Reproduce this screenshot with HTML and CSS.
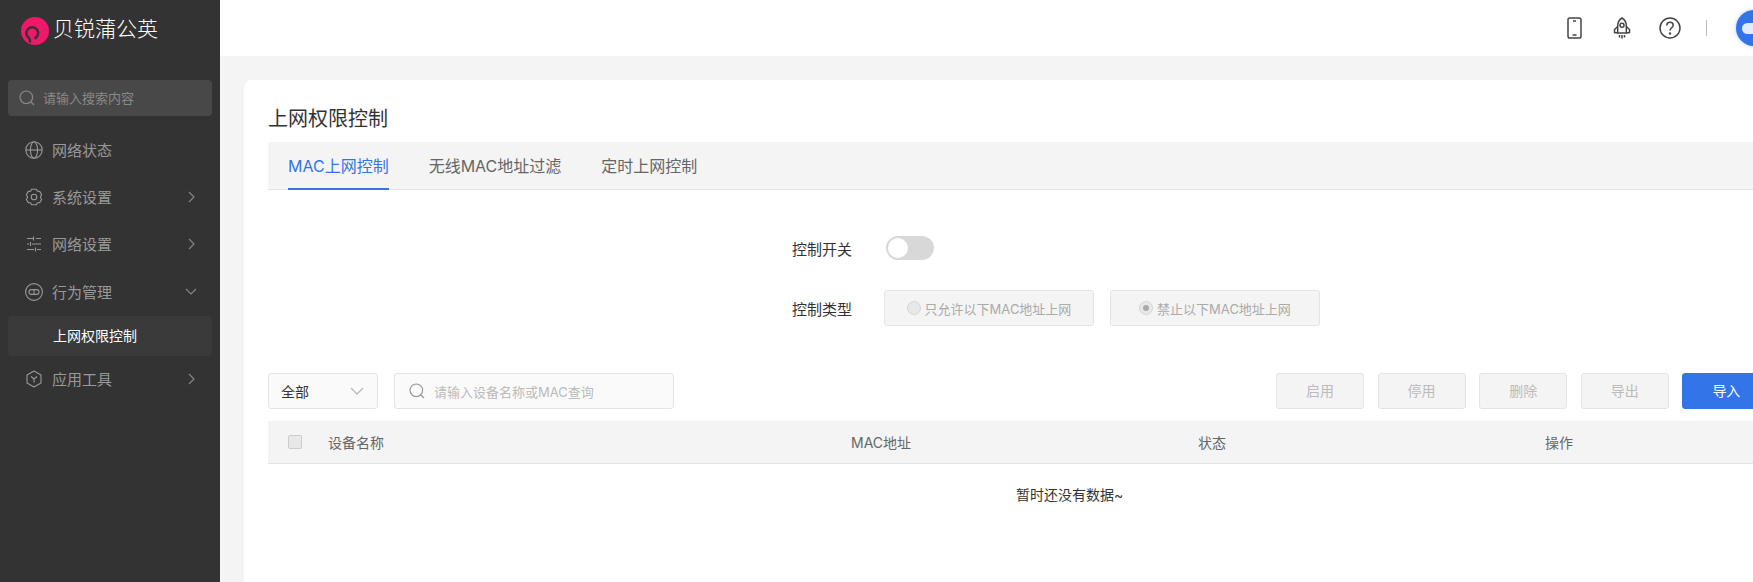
FILE: index.html
```html
<!DOCTYPE html>
<html lang="zh-CN">
<head>
<meta charset="utf-8">
<title>上网权限控制</title>
<link rel="stylesheet" href="styles.css">
</head>
<body>
<div class="app">
  <aside class="sidebar">
    <div class="brand">
      <svg class="logo" viewBox="0 0 28 28"><circle cx="14" cy="14" r="14" fill="#f0186a"/><path d="M8.800 25.500c.4-1.500.3-3-.6-4.400A5.900 5.900 0 1 1 13.500 21.500" fill="none" stroke="#333" stroke-width="2.500"/></svg>
      <span class="brand-name">贝锐蒲公英</span>
    </div>
    <div class="side-search">
      <svg class="ic15" viewBox="0 0 16 16"><circle cx="7.300" cy="7.300" r="6.300" fill="none" stroke="#888" stroke-width="1.200"/><path d="M12 12l3 3" stroke="#888" stroke-width="1.200"/></svg>
      <span>请输入搜索内容</span>
    </div>
    <nav class="menu">
      <div class="item">
        <svg class="ic18" viewBox="0 0 18 18" fill="none" stroke="#999" stroke-width="1.100"><circle cx="9" cy="9" r="8.200"/><ellipse cx="9" cy="9" rx="3.600" ry="8.200"/><path d="M1 9h16"/></svg>
        <span class="label">网络状态</span>
      </div>
      <div class="item">
        <svg class="ic18" viewBox="0 0 18 18" fill="none" stroke="#999" stroke-width="1.100"><path d="M6.600 1.200h4.800l1 2 2.300.2 1.900 3.100-1.200 2.500 1.200 2.500-1.900 3.100-2.300.2-1 2H6.600l-1-2-2.300-.2-1.900-3.100L2.600 9 1.400 6.500l1.900-3.100 2.300-.2z" stroke-linejoin="round"/><circle cx="9" cy="9" r="2.800"/></svg>
        <span class="label">系统设置</span>
        <svg class="chev-r" viewBox="0 0 7 12" fill="none" stroke="#888" stroke-width="1.100"><path d="M1 1l5 5-5 5"/></svg>
      </div>
      <div class="item">
        <svg class="ic18" viewBox="0 0 18 18" fill="none" stroke="#999" stroke-width="1.100"><path d="M2 3.500h6M11 3.500h5M8.500 1.500v4M2 9h2M7 9h9M5.500 7v4M2 14.500h7M12 14.500h4M10.500 12.500v4"/></svg>
        <span class="label">网络设置</span>
        <svg class="chev-r" viewBox="0 0 7 12" fill="none" stroke="#888" stroke-width="1.100"><path d="M1 1l5 5-5 5"/></svg>
      </div>
      <div class="item">
        <svg class="ic18" viewBox="0 0 18 18" fill="none" stroke="#999" stroke-width="1.100"><circle cx="9" cy="9" r="8.400"/><rect x="4" y="6.600" width="10" height="4.800" rx="2.400"/><path d="M9 6.600v4.800"/></svg>
        <span class="label">行为管理</span>
        <svg class="chev-d" viewBox="0 0 12 7" fill="none" stroke="#888" stroke-width="1.100"><path d="M1 1l5 5 5-5"/></svg>
      </div>
      <div class="subitem">上网权限控制</div>
      <div class="item">
        <svg class="ic18" viewBox="0 0 18 18" fill="none" stroke="#999" stroke-width="1.100"><path d="M9 1l7 4v8l-7 4-7-4V5z" stroke-linejoin="round"/><path d="M6 6.500l3 2.500 3-2.500M9 9v3.500"/></svg>
        <span class="label">应用工具</span>
        <svg class="chev-r" viewBox="0 0 7 12" fill="none" stroke="#888" stroke-width="1.100"><path d="M1 1l5 5-5 5"/></svg>
      </div>
    </nav>
  </aside>
  <div class="main">
    <header class="topbar">
      <svg class="top-phone" viewBox="0 0 15 22" fill="none" stroke="#444" stroke-width="1.500"><rect x="1" y="1" width="13" height="20" rx="1.800"/><path d="M6 4h3M5.500 18h4"/></svg>
      <svg class="top-rocket" viewBox="0 0 20 22" fill="none" stroke="#444" stroke-width="1.500"><path d="M10 1c3 1.800 4.300 4.500 4.300 8v7H5.700V9c0-3.500 1.300-6.200 4.300-8z" stroke-linejoin="round"/><circle cx="10" cy="8.300" r="2"/><path d="M5.700 9.500L2.500 12.500v3l3.200.5M14.300 9.500l3.200 3v3l-3.200.5M7.500 18v2.500M10 18v3.500M12.500 18v2.500"/></svg>
      <svg class="top-help" viewBox="0 0 22 22" fill="none" stroke="#444" stroke-width="1.500"><circle cx="11" cy="11" r="10"/><path d="M7.800 8.500c0-2 1.400-3.200 3.200-3.200s3.200 1.200 3.200 2.900c0 2.500-3.200 2.600-3.200 5.300"/><circle cx="11" cy="16.500" r=".5" fill="#444"/></svg>
      <span class="top-divider"></span>
      <span class="avatar"><span class="avatar-pill"></span></span>
    </header>
    <section class="card">
      <h1 class="title">上网权限控制</h1>
      <div class="tabs">
        <span class="tab active">MAC上网控制</span>
        <span class="tab">无线MAC地址过滤</span>
        <span class="tab">定时上网控制</span>
      </div>
      <div class="form">
        <div class="row switch-row">
          <span class="form-label">控制开关</span>
          <span class="switch"><span class="knob"></span></span>
        </div>
        <div class="row type-row">
          <span class="form-label">控制类型</span>
          <span class="radio-box"><span class="radio"></span>只允许以下MAC地址上网</span>
          <span class="radio-box"><span class="radio on"></span>禁止以下MAC地址上网</span>
        </div>
      </div>
      <div class="toolbar">
        <div class="select">全部
          <svg class="sel-chev" viewBox="0 0 14 8" fill="none" stroke="#bbb" stroke-width="1.300"><path d="M1 1l6 6 6-6"/></svg>
        </div>
        <div class="query">
          <svg class="ic15" viewBox="0 0 16 16"><circle cx="7.300" cy="7.300" r="6.300" fill="none" stroke="#999" stroke-width="1.200"/><path d="M12 12l3 3" stroke="#999" stroke-width="1.200"/></svg>
          <span>请输入设备名称或MAC查询</span>
        </div>
        <div class="actions">
          <span class="btn">启用</span>
          <span class="btn">停用</span>
          <span class="btn">删除</span>
          <span class="btn">导出</span>
          <span class="btn primary">导入</span>
        </div>
      </div>
      <div class="thead">
        <span class="check"></span>
        <span class="th th-name">设备名称</span>
        <span class="th th-mac">MAC地址</span>
        <span class="th th-state">状态</span>
        <span class="th">操作</span>
      </div>
      <div class="empty">暂时还没有数据~</div>
    </section>
  </div>
</div>
</body>
</html>
```
FILE: styles.css
```css
* { box-sizing: border-box; }
html, body { margin: 0; padding: 0; height: 100%; overflow: hidden; }
body { font-family: "Inter", "Noto Sans CJK SC", sans-serif; font-size: 14px; color: #333; background: #f4f4f4; }
svg { display: block; flex: none; }
.app { display: flex; width: 1753px; height: 582px; overflow: hidden; }

.sidebar { width: 220px; flex: none; background: #333; }
.brand { display: flex; align-items: center; height: 62px; padding: 0 0 0 21px; }
.logo { width: 28px; height: 28px; }
.brand-name { margin: 0 0 4px 4px; font-size: 21px; font-weight: 300; color: #fff; line-height: 28px; }
.side-search { display: flex; align-items: center; margin: 18px 8px 11px; height: 36px; padding-left: 11px; background: #484848; border-radius: 4px; color: #888; font-size: 13px; }
.ic15 { width: 16px; height: 16px; }
.side-search span { margin: 0 0 2px 8px; }
.item { display: flex; align-items: center; height: 47.5px; padding-left: 25px; color: #999; font-size: 15px; }
.item:first-child { height: 46px; }
.ic18 { width: 18px; height: 18px; }
.label { margin: 0 0 1px 9px; flex: 1; }
.chev-r { width: 7px; height: 12px; margin-right: 25px; }
.chev-d { width: 12px; height: 7px; margin-right: 23px; }
.subitem { margin: 0 8px; height: 40px; line-height: 40px; padding-left: 45px; background: #3a3a3a; border-radius: 4px; color: #fff; font-size: 14px; }

.main { flex: 1; min-width: 0; }
.topbar { display: flex; align-items: center; height: 56px; background: #fff; padding-left: 1347px; }
.top-phone { width: 15px; height: 22px; }
.top-rocket { width: 20px; height: 22px; margin-left: 30px; }
.top-help { width: 22px; height: 22px; margin-left: 27px; }
.top-divider { flex: none; width: 1px; height: 16px; background: #bbb; margin-left: 25px; }
.avatar { display: flex; align-items: center; flex: none; width: 36px; height: 36px; margin-left: 29px; padding-left: 6px; border-radius: 50%; background: #3374e8; box-shadow: 0 0 4px rgba(51, 116, 232, .35); }
.avatar-pill { flex: none; width: 24px; height: 11px; border-radius: 5.5px; background: #e4ebfb; }

.card { width: 1540px; margin: 24px 0 0 24px; height: 520px; padding: 24px; background: #fff; border-radius: 8px 8px 0 0; }
.title { margin: 0; font-size: 20px; font-weight: 400; line-height: 30px; height: 38px; color: #333; }
.tabs { display: flex; height: 48px; gap: 40px; padding-left: 20px; background: #f4f4f4; border-bottom: 1px solid #e4e4e4; }
.tab { height: 48px; line-height: 48px; font-size: 16px; color: #666; }
.tab.active { color: #3374e8; border-bottom: 2px solid #3374e8; }

.form { padding-top: 46px; height: 183px; }
.row { display: flex; align-items: center; padding-left: 524px; }
.switch-row { height: 24px; }
.type-row { margin-top: 30px; height: 36px; }
.form-label { width: 94px; font-size: 15px; color: #333; }
.switch { display: block; width: 48px; height: 24px; border-radius: 12px; background: #d8d8d8; padding: 2px; }
.knob { display: block; width: 20px; height: 20px; border-radius: 50%; background: #fff; }
.type-row .form-label { width: 92px; }
.radio-box { display: flex; align-items: center; justify-content: center; flex: none; width: 210px; height: 36px; margin-right: 16px; background: #f4f4f4; border: 1px solid #e4e4e4; border-radius: 3px; font-size: 13px; color: #aaa; }
.radio { width: 14px; height: 14px; margin-right: 4px; border-radius: 50%; background: #e8e8e8; border: 1px solid #d4d4d4; flex: none; position: relative; }
.radio.on::after { content: ""; position: absolute; left: 3px; top: 3px; width: 6px; height: 6px; border-radius: 50%; background: #aaa; }

.toolbar { display: flex; align-items: center; height: 36px; }
.select { display: flex; align-items: center; justify-content: space-between; flex: none; width: 110px; height: 36px; padding: 0 13px 0 12px; background: #fafafa; border: 1px solid #e4e4e4; border-radius: 3px; color: #333; }
.sel-chev { width: 14px; height: 8px; }
.query { display: flex; align-items: center; flex: none; width: 280px; height: 36px; margin-left: 16px; padding-left: 14px; background: #fafafa; border: 1px solid #e4e4e4; border-radius: 3px; color: #bbb; font-size: 13px; }
.query span { margin-left: 9px; }
.actions { display: flex; flex: none; gap: 13.6px; margin-left: 602px; }
.btn { display: block; flex: none; width: 88px; height: 36px; line-height: 34px; text-align: center; background: #f4f4f4; border: 1px solid #e4e4e4; border-radius: 3px; color: #bbb; }
.btn.primary { background: #3374e8; border-color: #3374e8; color: #fff; }

.thead { display: flex; align-items: center; height: 43px; margin-top: 12px; padding-left: 20px; background: #f4f4f4; border-bottom: 1px solid #e4e4e4; }
.check { width: 14px; height: 14px; background: #e8e8e8; border: 1px solid #ccc; border-radius: 2px; flex: none; }
.th { color: #666; font-size: 14px; }
.th-name { margin-left: 26px; width: 523px; }
.th-mac { width: 347px; }
.th-state { width: 347px; }
.empty { padding-left: 748px; margin-top: 20px; line-height: 22px; color: #333; font-size: 14px; }
```
